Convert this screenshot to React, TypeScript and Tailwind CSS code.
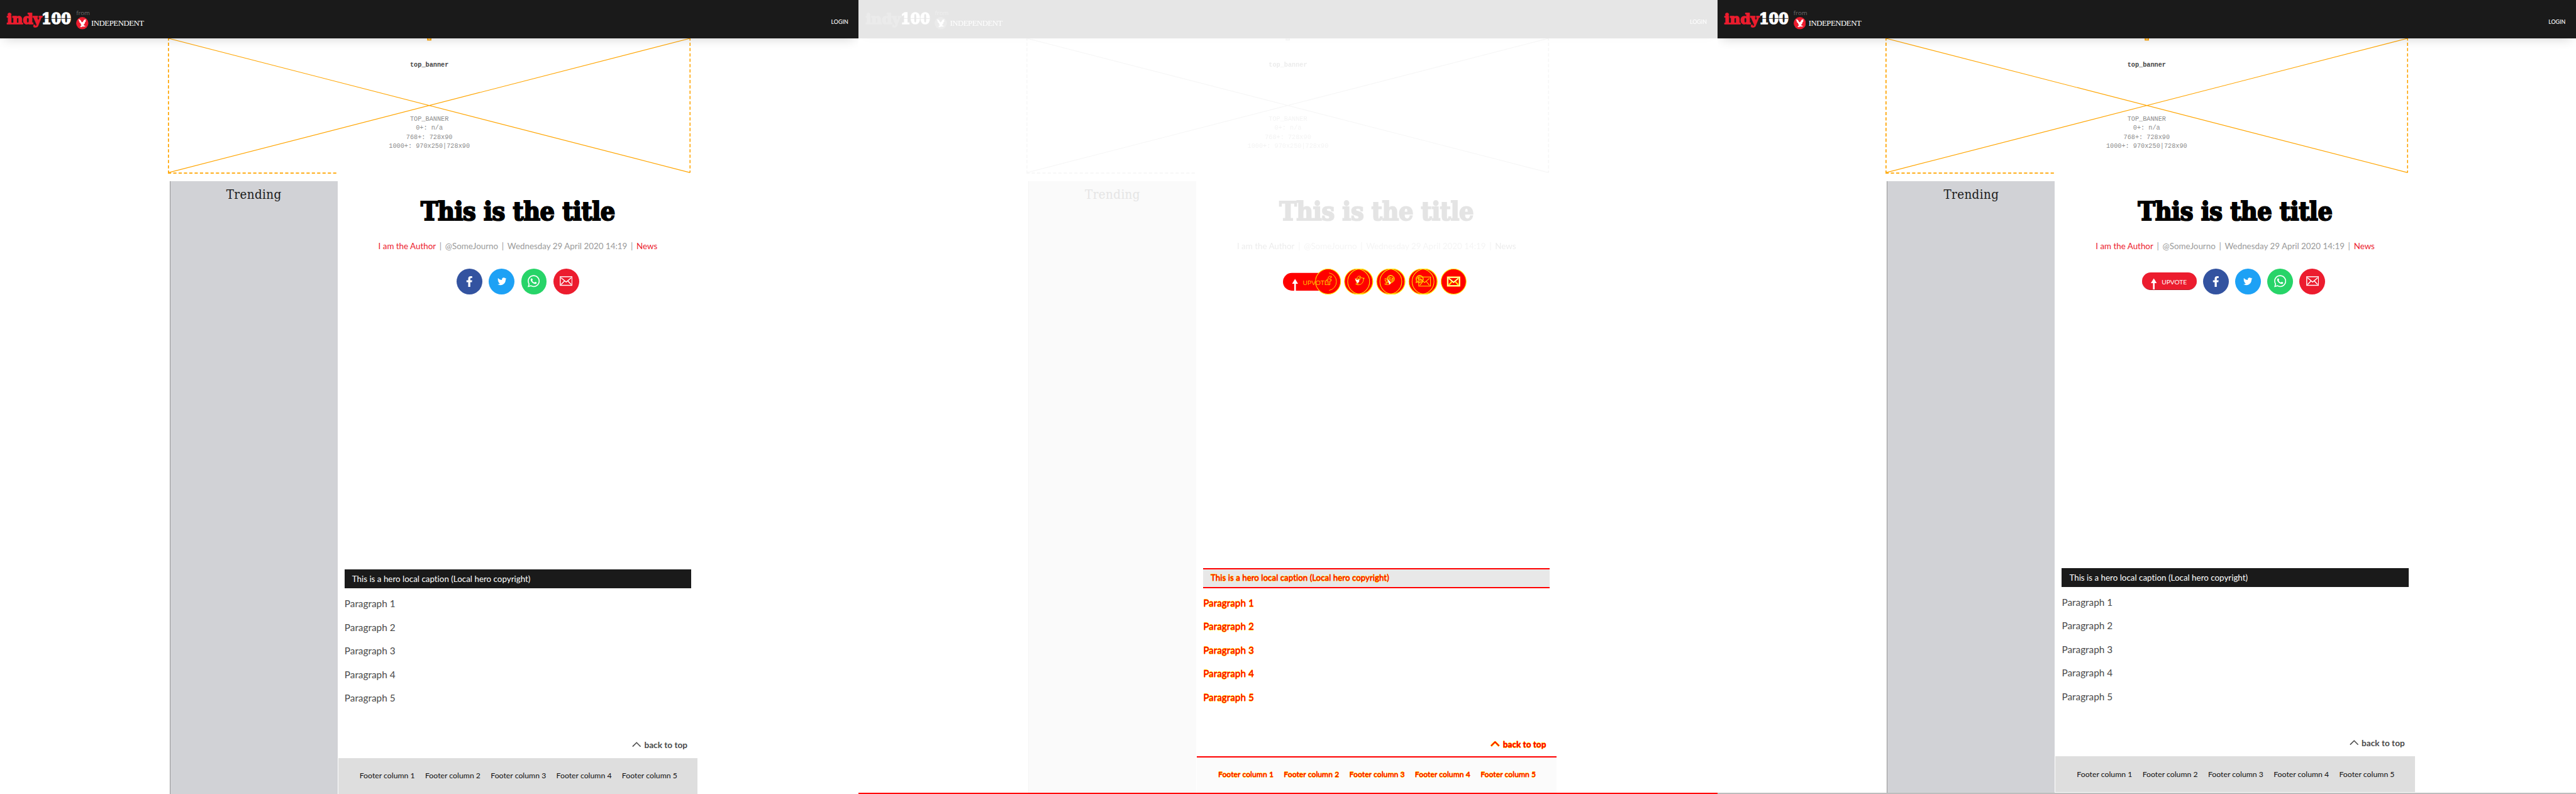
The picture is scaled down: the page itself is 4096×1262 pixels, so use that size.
import type { ReactNode } from "react";
import { FaFacebookF, FaTwitter, FaWhatsapp } from "react-icons/fa";

type Variant = "before" | "diff" | "after";

const paragraphs = [1, 2, 3, 4, 5].map((n) => `Paragraph ${n}`);
const columns = [1, 2, 3, 4, 5].map((n) => `Footer column ${n}`);

/* Changed text in the comparison: red core with yellow edges above and below. */
const changed =
  "text-[#ff0000] relative -top-[1.5px] [-webkit-text-stroke:0.5px_#ff0000] [text-shadow:0_1.7px_0_#ffff00,0_-1.7px_0_#ffff00]";

function MailIcon({ className }: { className?: string }) {
  return (
    <svg className={className} width="24" height="18" viewBox="0 0 24 18" fill="none" stroke="currentColor">
      <rect x="1" y="1" width="22" height="16" strokeWidth="1.7" />
      <path d="M2.5 3 12 11 21.5 3M2.5 15.5 9 8.8M21.5 15.5 15 8.8" strokeWidth="1.7" />
    </svg>
  );
}

function Eagle() {
  return (
    <svg width="23" height="23" viewBox="0 0 23 23">
      <circle cx="11.5" cy="11.5" r="11.4" fill="#ec1c2e" />
      <path
        d="M3.6 4.2 6 5.1 5.6 3.8 8.4 6.2 10.6 9.9 12.6 9 14.8 5.2 18.6 4.1 17.8 6.2 18.2 8 16.4 10.4 15.9 12.7 13.8 14.6 15.4 16.2 18.2 16.6 15.2 17.8 11.6 17.8 9.6 19 6.8 18 9.4 17.2 7.6 16.4 10.2 15.4 8.2 12.6 8.8 11.8 5.6 9.6 7 9.3 4.4 6.8 6 6.9Z"
        fill="#fff"
      />
    </svg>
  );
}

function Header() {
  return (
    <header className="flex h-[72px] w-full shrink-0 items-start bg-[#1a1a1a] shadow-[0_9px_20px_-8px_rgba(0,0,0,0.18)]">
      <div className="ml-3 mt-[17px] flex h-[36px] w-[121px] items-center">
        <svg width="121" height="38" viewBox="0 0 121 38" className="shrink-0 overflow-visible">
          <g fontFamily="'DejaVu Serif'" fontWeight="900" strokeWidth="1.8">
            <text x="0.5" y="28" fontSize="27" textLength="65" lengthAdjust="spacingAndGlyphs" fill="#ec1c2e" stroke="#ec1c2e">
              indy
            </text>
            <text x="65.5" y="28" fontSize="28" textLength="55" lengthAdjust="spacingAndGlyphs" fill="#fff" stroke="#fff">
              100
            </text>
          </g>
          <path d="M66 18H120" stroke="#1a1a1a" strokeWidth="1" />
        </svg>
      </div>
      <div className="ml-[9px] mt-[17px] flex w-[128px] flex-col">
        <span className="h-[15px] font-['Open_Sans'] text-[11.3px] leading-[15px] text-[#6b6b6b]">from</span>
        <div className="flex h-[23px] items-center">
          <Eagle />
          <span className="ml-[5px] whitespace-nowrap pt-0.5 font-['Liberation_Serif'] text-[15px] leading-[20px] tracking-[-0.55px] text-white">
            INDEPENDENT
          </span>
        </div>
      </div>
      <span className="ml-auto mr-[19.5px] mt-[33px] font-[Lato] text-[10.4px] leading-4 font-medium text-white">LOGIN</span>
    </header>
  );
}

function Banner() {
  return (
    <section className="relative ml-[313px] h-[252px] w-[974px] shrink-0 font-['Liberation_Mono'] text-[12px]">
      <svg className="absolute inset-0" width="974" height="252" viewBox="0 0 974 252" fill="none" stroke="#ffa500">
        <path d="M1 0 973 250M973 0 1 250" strokeWidth="1.35" />
        <path d="M1 -2V250M973 -2V250" strokeWidth="2" strokeDasharray="6 3.93" />
        <path d="M0 251H316" strokeWidth="2" strokeDasharray="6 3.93" />
        <path d="M483 0h8v4h-8z" fill="#ffa500" stroke="none" />
        <path d="M485.800 0v1.500h2.400v-1.500" stroke="#fff" strokeWidth="0.8" />
      </svg>
      <div className="relative flex flex-col items-center">
        <strong className="mt-[40px] leading-[17px] font-bold text-[#444]">top_banner</strong>
        <div className="mt-[84px] flex flex-col items-center leading-[17px] text-[#8c8c8c]">
          <span>TOP_BANNER</span>
          <span>0+: n/a</span>
          <span>768+: 728x90</span>
          <span>1000+: 970x250|728x90</span>
        </div>
      </div>
    </section>
  );
}

function Circle({ color, children }: { color: string; children: ReactNode }) {
  return <span className={`flex size-12 items-center justify-center rounded-full text-white ${color}`}>{children}</span>;
}

function ShareButtons({ upvote }: { upvote: boolean }) {
  return (
    <div className="flex items-center gap-3">
      {upvote && (
        <span className="flex h-[33px] w-[102px] items-center overflow-hidden rounded-full border-b border-[#b3202c] bg-[#ec1c2e] pl-[17px] text-white">
          <svg className="mt-px" width="11" height="33" viewBox="0 0 11 33" fill="#fff">
            <path d="M5.500 11 11 20H7V33H4V20H0Z" />
          </svg>
          <span className="ml-[9px] pt-[3px] text-[12px] leading-none">UPVOTE</span>
        </span>
      )}
      <Circle color="bg-[#3353a0]">
        <FaFacebookF className="h-5 w-[12.5px]" />
      </Circle>
      <Circle color="bg-[#1da1f5]">
        <FaTwitter className="size-[17px]" />
      </Circle>
      <Circle color="bg-[#27d468]">
        <FaWhatsapp className="h-[25.500px] w-[22.500px]" />
      </Circle>
      <Circle color="bg-[#ec1c2e]">
        <MailIcon />
      </Circle>
    </div>
  );
}

/* Both button rows laid over each other, as the comparison marks them. */
function ShareDiff() {
  const edge = { stroke: "#ffee00", fill: "#ff0000", strokeWidth: 34, className: "overflow-visible" };
  return (
    <svg className="overflow-visible" width="342" height="48" viewBox="0 0 342 48" fill="#ff0000" stroke="#ffee00" strokeWidth="1.2">
      <rect x="0" y="8" width="102" height="33" rx="16.500" stroke="none" />
      <circle cx="84" cy="24" r="23.400" />
      {[138, 198, 258].map((x) => (
        <g key={x}>
          <circle cx={x + 6} cy="24" r="23.400" />
          <circle cx={x} cy="24" r="23.400" />
          <circle cx={x + 6} cy="24" r="23.400" fill="none" />
        </g>
      ))}
      <circle cx="318" cy="24" r="23.400" />
      <path d="M22.500 19 28 28H24V41H21V28H17Z" fill="#fff" stroke="none" />
      <text x="37" y="30.500" fontSize="12" fontFamily="Lato" fill="#ffdd00" stroke="#ff0000" strokeWidth="0.2">
        UPVOTE
      </text>
      <path d="M86 8A16.500 16.500 0 0 1 86 40.500" fill="none" strokeWidth="1" />
      <FaFacebookF x={78} y={14} width={12.5} height={20} {...edge} />
      <FaFacebookF x={132} y={14} width={12.5} height={20} {...edge} />
      <FaTwitter x={135.5} y={15.5} width={17} height={17} {...edge} />
      <path d="M134 18 138 21 142 20V25L138 27Z" fill="#fff" stroke="none" />
      <FaTwitter x={189.5} y={15.5} width={17} height={17} {...edge} />
      <FaWhatsapp x={192.750} y={11.250} width={22.5} height={25.5} {...edge} />
      <path d="M195 20 199 23 201 27 198 30Z" fill="#fff" stroke="none" />
      <FaWhatsapp x={246.750} y={11.250} width={22.5} height={25.5} {...edge} />
      <path d="M253 15.500H275V32.500H253ZM255 18 264 26 273 18M255 31 261 24M273 31 267 24" fill="none" />
      <g fill="none">
        <rect x="307" y="16" width="22" height="16" strokeWidth="3" />
        <rect x="307" y="16" width="22" height="16" stroke="#fff" strokeWidth="1.400" />
        <path d="M309 18 318 25.500 327 18M309 30.500 315 24M327 30.500 321 24" strokeWidth="2.600" />
        <path d="M309 18 318 25.500 327 18" stroke="#fff" strokeWidth="1.200" />
      </g>
    </svg>
  );
}

function Article({ variant }: { variant: Variant }) {
  const diff = variant === "diff";
  const fade = diff ? "opacity-10 grayscale" : "";
  const lift = variant === "before" ? "mt-[513px]" : "mt-[510px]";
  return (
    <main className="ml-px flex w-[670px] flex-col [&>*]:shrink-0">
      <h1
        className={`mt-[28px] flex h-14 items-center justify-center whitespace-nowrap font-['DejaVu_Serif_Condensed'] text-[48px] leading-none font-bold tracking-[-0.4px] text-black [-webkit-text-stroke:2.400px_#000] ${fade}`}
      >
        This is the title
      </h1>
      <div className={`mt-[26.500px] flex h-5 w-[520px] items-center justify-between self-center whitespace-nowrap text-[15.700px] leading-5 text-[#9b9b9b] ${fade}`}>
        <span className="text-[#ec1c2e]">I am the Author</span>
        <span>|</span>
        <span>@SomeJourno</span>
        <span>|</span>
        <span>Wednesday 29 April 2020 14:19</span>
        <span>|</span>
        <span className="text-[#ec1c2e]">News</span>
      </div>
      <div className={`mt-[31.500px] flex h-12 justify-center ${variant === "before" ? "" : "pr-[6px]"}`}>
        {diff ? <ShareDiff /> : <ShareButtons upvote={variant === "after"} />}
      </div>
      {diff ? (
        <div className={`ml-3 flex h-[38px] w-[646px] items-center border-y-[3px] border-[#ff0000] bg-[#e8e8e8] pl-3.5 text-[15.700px] whitespace-nowrap ${lift}`}>
          <span className={changed}>This is a hero local caption (Local hero copyright)</span>
        </div>
      ) : (
        <div className={`ml-3 flex h-[35px] w-[646px] items-center bg-[#1a1a1a] pl-3.5 text-[15.700px] whitespace-nowrap text-white ${lift}`}>
          This is a hero local caption (Local hero copyright)
        </div>
      )}
      <div className="mt-[7px] ml-[12px] flex flex-col text-[18px] text-[#4a4a4a]">
        {paragraphs.map((p) => (
          <p key={p} className="h-11 leading-[44px]">
            <span className={diff ? changed : ""}>{p}</span>
          </p>
        ))}
      </div>
      <div className="mt-[53px] mr-[19px] flex h-6 items-center justify-end gap-[6px] text-[16px] font-bold text-[#4a4a4a]">
        <svg className={diff ? "-mt-1" : "-mt-[3px]"} width="17" height="10" viewBox="0 0 17 10" fill="none">
          {diff ? (
            <>
              <path d="M1 9 8.500 1.500 16 9" stroke="#ffee00" strokeWidth="4" />
              <path d="M1 9 8.500 1.500 16 9" stroke="#ff0000" strokeWidth="2.200" />
            </>
          ) : (
            <path d="M1 9 8.500 1.500 16 9" stroke="#4a4a4a" strokeWidth="1.900" />
          )}
        </svg>
        <span className={diff ? changed : ""}>back to top</span>
      </div>
      <footer
        className={
          diff
            ? "mt-[9px] flex h-[70px] justify-between border-t-[3px] border-[#ff0000] bg-[#fbfbfb] pt-6 pr-[38px] pl-10 text-[14.400px] leading-[19px] whitespace-nowrap"
            : "mt-3 flex h-[67px] items-center justify-between bg-[#dedede] pr-[38px] pl-10 text-[14.400px] leading-[19px] whitespace-nowrap text-[#111]"
        }
      >
        {columns.map((c) => (
          <span key={c} className={diff ? "h-[19px] " + changed : ""}>
            {c}
          </span>
        ))}
      </footer>
    </main>
  );
}

function Panel({ variant }: { variant: Variant }) {
  const diff = variant === "diff";
  return (
    <div className="flex h-[1480px] w-[1600px] shrink-0 flex-col overflow-hidden bg-white">
      <div className={`relative z-10 ${diff ? "opacity-10 grayscale" : ""}`}>
        <Header />
      </div>
      <div className={diff ? "opacity-10 grayscale" : ""}>
        <Banner />
      </div>
      <div className={`flex shrink-0 pt-[14px] pl-[316px] ${variant === "before" ? "h-[1156px]" : "h-[1152px]"}`}>
        <aside
          className={`w-[313px] shrink-0 border-l pt-px text-center font-['DejaVu_Serif_Condensed'] text-[24px] leading-[48px] tracking-[0.4px] ${
            diff ? "border-[#f4f4f4] bg-[#fafafa] text-[#e5e5e5]" : "border-[#949494] bg-[#d1d2d6] text-[#1a1a1a]"
          }`}
        >
          Trending
        </aside>
        <Article variant={variant} />
      </div>
      {variant !== "before" && (
        <div className={diff ? "h-1 w-full shrink-0 bg-[#ff0000]" : "mt-px h-[3px] w-full shrink-0 bg-[#bdbdbd]"} />
      )}
    </div>
  );
}

export default function App() {
  return (
    <div className="h-[1262px] w-[4096px] overflow-hidden bg-white">
      <div className="flex h-[1479px] w-[4800px] overflow-hidden font-[Lato] [font-variant-ligatures:none] [zoom:0.853333]">
        <Panel variant="before" />
        <Panel variant="diff" />
        <Panel variant="after" />
      </div>
    </div>
  );
}
